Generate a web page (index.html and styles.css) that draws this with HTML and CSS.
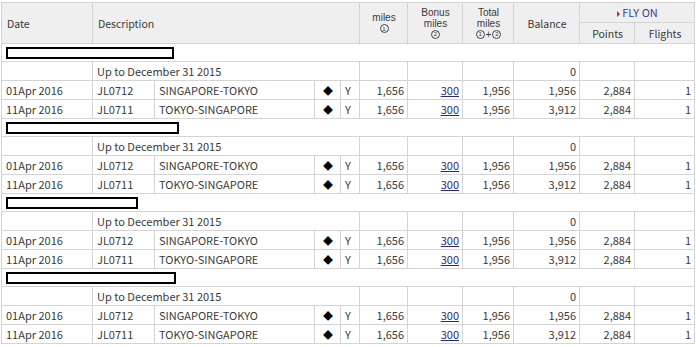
FILE: index.html
```html
<!DOCTYPE html>
<html>
<head>
<meta charset="utf-8">
<link rel="stylesheet" href="styles.css">
</head>
<body>
<table class="miles">
  <colgroup>
    <col class="c-date"><col class="c-code"><col class="c-route"><col class="c-mark"><col class="c-cls">
    <col class="c-miles"><col class="c-bonus"><col class="c-total"><col class="c-bal"><col class="c-pts"><col class="c-flt">
  </colgroup>
  <thead>
    <tr class="h1">
      <th rowspan="2" class="left">Date</th>
      <th rowspan="2" colspan="4" class="left">Description</th>
      <th rowspan="2" class="stack"><span class="ln">miles</span><span class="cl"><span class="cn">1</span></span></th>
      <th rowspan="2" class="stack"><span class="ln">Bonus</span><span class="ln">miles</span><span class="cl"><span class="cn">2</span></span></th>
      <th rowspan="2" class="stack"><span class="ln">Total</span><span class="ln">miles</span><span class="cl"><span class="cn">1</span><span class="plus">+</span><span class="cn">2</span></span></th>
      <th rowspan="2">Balance</th>
      <th colspan="2" class="flyon"><span class="arrow"></span>FLY ON</th>
    </tr>
    <tr class="h2">
      <th>Points</th>
      <th>Flights</th>
    </tr>
  </thead>
  <tbody>
    <tr class="grp"><td colspan="11"><span class="redact w1"></span></td></tr>
    <tr class="row"><td></td><td colspan="4">Up to December 31 2015</td><td></td><td></td><td></td><td class="num">0</td><td></td><td></td></tr>
    <tr class="row"><td>01Apr 2016</td><td>JL0712</td><td>SINGAPORE-TOKYO</td><td class="mark">◆</td><td>Y</td><td class="num">1,656</td><td class="num"><a href="#">300</a></td><td class="num">1,956</td><td class="num">1,956</td><td class="num">2,884</td><td class="num">1</td></tr>
    <tr class="row"><td>11Apr 2016</td><td>JL0711</td><td>TOKYO-SINGAPORE</td><td class="mark">◆</td><td>Y</td><td class="num">1,656</td><td class="num"><a href="#">300</a></td><td class="num">1,956</td><td class="num">3,912</td><td class="num">2,884</td><td class="num">1</td></tr>

    <tr class="grp"><td colspan="11"><span class="redact w2"></span></td></tr>
    <tr class="row"><td></td><td colspan="4">Up to December 31 2015</td><td></td><td></td><td></td><td class="num">0</td><td></td><td></td></tr>
    <tr class="row"><td>01Apr 2016</td><td>JL0712</td><td>SINGAPORE-TOKYO</td><td class="mark">◆</td><td>Y</td><td class="num">1,656</td><td class="num"><a href="#">300</a></td><td class="num">1,956</td><td class="num">1,956</td><td class="num">2,884</td><td class="num">1</td></tr>
    <tr class="row"><td>11Apr 2016</td><td>JL0711</td><td>TOKYO-SINGAPORE</td><td class="mark">◆</td><td>Y</td><td class="num">1,656</td><td class="num"><a href="#">300</a></td><td class="num">1,956</td><td class="num">3,912</td><td class="num">2,884</td><td class="num">1</td></tr>

    <tr class="grp"><td colspan="11"><span class="redact w3"></span></td></tr>
    <tr class="row"><td></td><td colspan="4">Up to December 31 2015</td><td></td><td></td><td></td><td class="num">0</td><td></td><td></td></tr>
    <tr class="row"><td>01Apr 2016</td><td>JL0712</td><td>SINGAPORE-TOKYO</td><td class="mark">◆</td><td>Y</td><td class="num">1,656</td><td class="num"><a href="#">300</a></td><td class="num">1,956</td><td class="num">1,956</td><td class="num">2,884</td><td class="num">1</td></tr>
    <tr class="row"><td>11Apr 2016</td><td>JL0711</td><td>TOKYO-SINGAPORE</td><td class="mark">◆</td><td>Y</td><td class="num">1,656</td><td class="num"><a href="#">300</a></td><td class="num">1,956</td><td class="num">3,912</td><td class="num">2,884</td><td class="num">1</td></tr>

    <tr class="grp"><td colspan="11"><span class="redact w4"></span></td></tr>
    <tr class="row"><td></td><td colspan="4">Up to December 31 2015</td><td></td><td></td><td></td><td class="num">0</td><td></td><td></td></tr>
    <tr class="row"><td>01Apr 2016</td><td>JL0712</td><td>SINGAPORE-TOKYO</td><td class="mark">◆</td><td>Y</td><td class="num">1,656</td><td class="num"><a href="#">300</a></td><td class="num">1,956</td><td class="num">1,956</td><td class="num">2,884</td><td class="num">1</td></tr>
    <tr class="row"><td>11Apr 2016</td><td>JL0711</td><td>TOKYO-SINGAPORE</td><td class="mark">◆</td><td>Y</td><td class="num">1,656</td><td class="num"><a href="#">300</a></td><td class="num">1,956</td><td class="num">3,912</td><td class="num">2,884</td><td class="num">1</td></tr>
  </tbody>
</table>
</body>
</html>
```
FILE: styles.css
```css
html, body {
  margin: 0;
  padding: 0;
  background: #ffffff;
}
body {
  padding: 2px 0 0 1px;
  font-family: "Noto Sans CJK JP", "Liberation Sans", sans-serif;
  font-size: 11px;
  color: #3a3a3a;
}
.miles {
  border-collapse: collapse;
  table-layout: fixed;
  width: 693px;
}
.c-date { width: 91px; }
.c-code { width: 62px; }
.c-route { width: 160px; }
.c-mark { width: 26px; }
.c-cls { width: 19px; }
.c-miles { width: 48px; }
.c-bonus { width: 55px; }
.c-total { width: 51px; }
.c-bal { width: 66px; }
.c-pts { width: 55px; }
.c-flt { width: 60px; }

.miles th, .miles td {
  border: 1px solid #d4d4d4;
  padding: 0 3px 0 4px;
  white-space: nowrap;
  overflow: hidden;
}
.miles th {
  background: #efefef;
  font-weight: normal;
  font-size: 10.5px;
  line-height: 13px;
  text-align: center;
  color: #3a3a3a;
}
.miles th.left {
  text-align: left;
  padding-left: 5px;
}
.h1 th { height: 19px; }
.h2 th { height: 20px; }
.stack {
  padding-top: 1px;
  padding-bottom: 1px;
}
.ln {
  display: block;
  font-family: "Liberation Sans", sans-serif;
  font-size: 10px;
  line-height: 11px;
  height: 11px;
}
.cl {
  display: flex;
  justify-content: center;
  align-items: center;
  gap: 1px;
  height: 11px;
}
.cn {
  display: inline-flex;
  align-items: center;
  justify-content: center;
  box-sizing: border-box;
  width: 9px;
  height: 9px;
  border: 1px solid #444;
  border-radius: 50%;
  font-family: "Liberation Sans", sans-serif;
  font-size: 6px;
  line-height: 6px;
  color: #333;
}
.plus {
  font-family: "Liberation Sans", sans-serif;
  font-size: 10px;
  line-height: 9px;
}
.flyon {
  color: #3b3b8f !important;
  font-size: 11px !important;
}
.arrow {
  display: inline-block;
  width: 0;
  height: 0;
  border-top: 3px solid transparent;
  border-bottom: 3px solid transparent;
  border-left: 3px solid #d0242c;
  margin-right: 2px;
  vertical-align: 0;
}
.row td {
  height: 18px;
  line-height: 13px;
}
.grp td {
  height: 17px;
  line-height: 11px;
  padding: 0 0 0 4px;
}
.redact {
  display: block;
  height: 8px;
  border: 2px solid #000;
  background: #fff;
  box-sizing: content-box;
}
.w1 { width: 164px; }
.w2 { width: 169px; }
.w3 { width: 128px; }
.w4 { width: 166px; }
.num { text-align: right; }
.mark {
  text-align: center;
  color: #000;
  font-size: 10px;
}
.miles a {
  color: #2a2a7a;
  text-decoration: underline;
}
```
